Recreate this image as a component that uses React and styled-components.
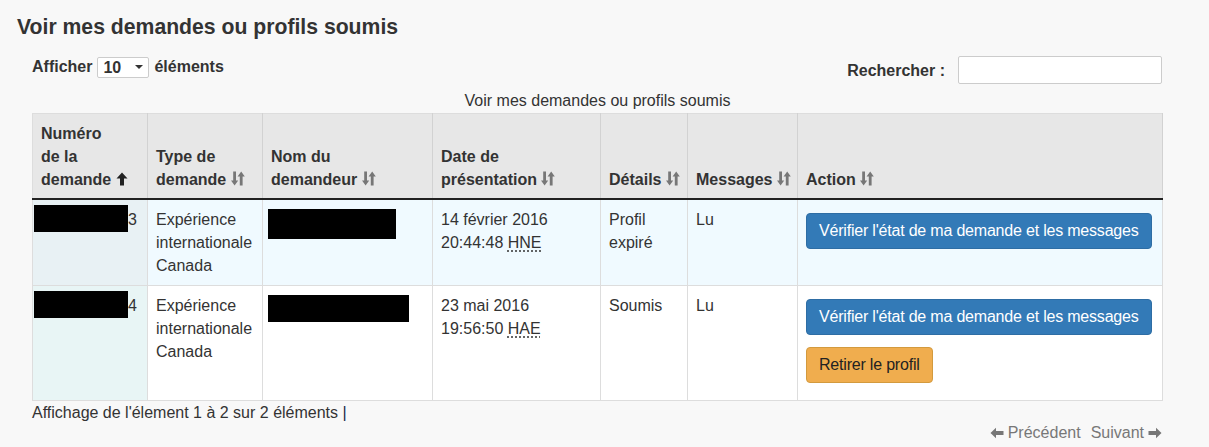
import styled, { createGlobalStyle } from "styled-components";

const GlobalStyle = createGlobalStyle`
    body {
        margin: 0;
        background: #f8f8f8;
        color: #333;
        font-family: "Liberation Sans", Arial, sans-serif;
        font-size: 16px;
        line-height: 23px;
    }
`;

const rows = [
    {
        num: "3",
        idBox: 94,
        type: "Expérience internationale Canada",
        nameW: 128,
        nameH: 30,
        date: "14 février 2016",
        time: "20:44:48",
        tz: "HNE",
        tzTitle: "Heure normale de l'Est",
        details: "Profil expiré",
        messages: "Lu",
        canWithdraw: false,
    },
    {
        num: "4",
        idBox: 94,
        type: "Expérience internationale Canada",
        nameW: 141,
        nameH: 27,
        date: "23 mai 2016",
        time: "19:56:50",
        tz: "HAE",
        tzTitle: "Heure avancée de l'Est",
        details: "Soumis",
        messages: "Lu",
        canWithdraw: true,
    },
];

const columns = [
    { lines: ["Numéro", "de la"], last: "demande", width: 115, sorted: true },
    { lines: ["Type de"], last: "demande", width: 115 },
    { lines: ["Nom du"], last: "demandeur", width: 170 },
    { lines: ["Date de"], last: "présentation", width: 168 },
    { lines: [], last: "Détails", width: 87 },
    { lines: [], last: "Messages", width: 110 },
    { lines: [], last: "Action", width: 365 },
];

const SortIcon = () => (
    <svg width="14" height="15" viewBox="0 0 14 15">
        <path d="M2.2 0.5h2.8v9h2.2l-3.6 5-3.6-5h2.2z" fill="#777" />
        <path d="M8.8 14.5h2.8v-9h2.2l-3.6-5-3.6 5h2.2z" fill="#777" />
    </svg>
);

const SortedIcon = () => (
    <svg width="12" height="14" viewBox="0 0 12 14">
        <path d="M6 0.5l5.5 6H8v7H4v-7H0.5z" fill="#222" />
    </svg>
);

const ArrowLeft = () => (
    <svg width="14" height="12" viewBox="0 0 14 12">
        <path d="M0.5 6L6 0.8v3.2h7.5v4H6v3.2z" fill="#777" />
    </svg>
);

const ArrowRight = () => (
    <svg width="14" height="12" viewBox="0 0 14 12">
        <path d="M13.5 6L8 0.8v3.2H0.5v4H8v3.2z" fill="#777" />
    </svg>
);

const App = () => {
    return (
        <Page>
            <GlobalStyle />
            <Title>Voir mes demandes ou profils soumis</Title>
            <Wrapper>
                <Controls>
                    <Length>
                        Afficher
                        <SelectBox>
                            <select defaultValue="10">
                                <option value="10">10</option>
                                <option value="25">25</option>
                                <option value="50">50</option>
                            </select>
                            <Caret />
                        </SelectBox>
                        éléments
                    </Length>
                    <Search>
                        Rechercher :
                        <input type="search" />
                    </Search>
                </Controls>

                <Table>
                    <caption>Voir mes demandes ou profils soumis</caption>
                    <colgroup>
                        {columns.map((c, i) => (
                            <col key={i} style={{ width: c.width }} />
                        ))}
                    </colgroup>
                    <thead>
                        <tr>
                            {columns.map((c, i) => (
                                <th key={i}>
                                    {c.lines.map((l) => (
                                        <span key={l}>
                                            {l}
                                            <br />
                                        </span>
                                    ))}
                                    <NoWrap>
                                        {c.last} {c.sorted ? <SortedIcon /> : <SortIcon />}
                                    </NoWrap>
                                </th>
                            ))}
                        </tr>
                    </thead>
                    <tbody>
                        {rows.map((r, i) => (
                            <Row key={r.num} $odd={i % 2 === 0}>
                                <IdCell $odd={i % 2 === 0}>
                                    <Redacted $w={r.idBox} $h={27} $left={-7} $top={-3} />
                                    {r.num}
                                </IdCell>
                                <td>{r.type}</td>
                                <td>
                                    <Redacted $w={r.nameW} $h={r.nameH} $left={-3} $top={1} />
                                </td>
                                <td>
                                    {r.date}
                                    <br />
                                    {r.time} <abbr title={r.tzTitle}>{r.tz}</abbr>
                                </td>
                                <td>{r.details}</td>
                                <td>{r.messages}</td>
                                <td>
                                    <Actions>
                                        <Button $kind="primary">
                                            Vérifier l'état de ma demande et les messages
                                        </Button>
                                        {r.canWithdraw && (
                                            <Button $kind="warning">Retirer le profil</Button>
                                        )}
                                    </Actions>
                                </td>
                            </Row>
                        ))}
                    </tbody>
                </Table>

                <Footer>
                    <Info>
                        Affichage de l'élement 1 à 2 sur 2 éléments <Bar>|</Bar>
                    </Info>
                    <Pager>
                        <PageLink>
                            <ArrowLeft /> Précédent
                        </PageLink>
                        <PageLink>
                            Suivant <ArrowRight />
                        </PageLink>
                    </Pager>
                </Footer>
            </Wrapper>
        </Page>
    );
};

const Page = styled.div`
    padding: 15px 47px 0 17px;
    width: 1145px;
`;

const Title = styled.h2`
    margin: 0;
    font-size: 21.2px;
    line-height: 24px;
    font-weight: bold;
    color: #333;
`;

const Wrapper = styled.div`
    margin-left: 15px;
    width: 1130px;
`;

const Controls = styled.div`
    display: flex;
    justify-content: space-between;
    align-items: flex-start;
    margin-top: 17px;
`;

const Length = styled.label`
    display: flex;
    align-items: center;
    gap: 5px;
    font-weight: bold;
    height: 21px;
`;

const SelectBox = styled.span`
    position: relative;
    display: inline-block;
    width: 52px;
    height: 21px;

    select {
        appearance: none;
        width: 100%;
        height: 100%;
        box-sizing: border-box;
        margin: 0;
        padding: 0 0 0 5px;
        border: 1px solid #ccc;
        border-radius: 2px;
        background: #fff;
        font-family: inherit;
        font-size: 16px;
        font-weight: bold;
        color: #333;
    }
`;

const Caret = styled.span`
    position: absolute;
    right: 6px;
    top: 9px;
    border-left: 4px solid transparent;
    border-right: 4px solid transparent;
    border-top: 4px solid #333;
    pointer-events: none;
`;

const Search = styled.label`
    display: flex;
    align-items: center;
    gap: 13px;
    font-weight: bold;

    input {
        width: 204px;
        height: 28px;
        box-sizing: border-box;
        margin: 0;
        border: 1px solid #ccc;
        border-radius: 2px;
        background: #fff;
    }
`;

const Table = styled.table`
    width: 1130px;
    table-layout: fixed;
    border-collapse: collapse;
    border: 1px solid #ddd;

    caption {
        padding: 7px 0 2px;
        line-height: 20px;
        text-align: center;
        color: #333;
    }

    th {
        background: #e7e7e7;
        border-right: 1px solid #d2d2d2;
        border-bottom: 2px solid #222;
        padding: 8px 8px 7px;
        text-align: left;
        vertical-align: bottom;
        font-weight: bold;
    }

    td {
        border-right: 1px solid #ddd;
        border-bottom: 1px solid #ddd;
        padding: 8px;
        vertical-align: top;
    }

    abbr {
        text-decoration: underline dotted;
        text-underline-offset: 3px;
    }
`;

const NoWrap = styled.span`
    white-space: nowrap;

    svg {
        vertical-align: -1px;
    }
`;

const Row = styled.tr`
    background: ${(p) => (p.$odd ? "#f0faff" : "#fff")};
`;

const IdCell = styled.td`
    background: ${(p) => (p.$odd ? "#e8f1f4" : "#e8f5f5")};
    white-space: nowrap;
`;

const Redacted = styled.span`
    position: relative;
    left: ${(p) => p.$left}px;
    top: ${(p) => p.$top}px;
    display: inline-block;
    width: ${(p) => p.$w}px;
    height: ${(p) => p.$h}px;
    margin-right: ${(p) => p.$left}px;
    vertical-align: top;
    background: #000;
`;

const Actions = styled.div`
    display: flex;
    flex-direction: column;
    align-items: flex-start;
    gap: 12px;
    padding: 5px 0 9px;
`;

const Button = styled.button`
    font-family: inherit;
    font-size: 16px;
    line-height: 22px;
    letter-spacing: -0.2px;
    padding: 6px 12px;
    white-space: nowrap;
    border-radius: 4px;
    border: 1px solid ${(p) => (p.$kind === "primary" ? "#2e6da4" : "#d39a3e")};
    background: ${(p) => (p.$kind === "primary" ? "#337ab7" : "#f0ad4e")};
    color: ${(p) => (p.$kind === "primary" ? "#fff" : "#222")};
    cursor: pointer;
`;

const Footer = styled.div`
    display: flex;
    justify-content: space-between;
    align-items: flex-start;
`;

const Info = styled.div`
    color: #333;
`;

const Bar = styled.span`
    color: #1a2a44;
`;

const Pager = styled.div`
    display: flex;
    gap: 10px;
    padding-top: 20px;
`;

const PageLink = styled.span`
    display: flex;
    align-items: center;
    gap: 4px;
    color: #777;
`;

export default App;
